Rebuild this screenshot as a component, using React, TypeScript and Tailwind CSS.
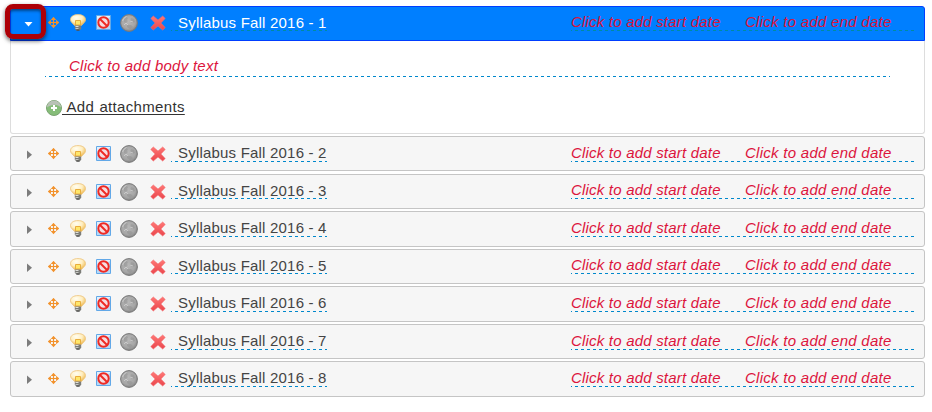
import React from "react";

const FONT = "font-['Liberation_Sans',Arial,sans-serif]";

function Move() {
  return (
    <svg className="ml-[15px] shrink-0" width="11" height="12" viewBox="0 0 11 12" fill="#f2922c">
      <path d="M4.900 1h1.200v9H4.900zM1 4.900h9v1.200H1z" />
      <path d="M5.500-.2 8.300 2.900H2.700zM5.500 11.200 8.300 8.100H2.700zM-.2 5.500 2.900 2.700v5.600zM11.200 5.500 8.100 2.700v5.600z" />
    </svg>
  );
}

function Bulb() {
  return (
    <svg className="ml-[11px] shrink-0" width="16" height="18" viewBox="0 0 16 18">
      <defs>
        <radialGradient id="glow" cx="38%" cy="28%" r="72%">
          <stop offset="0" stopColor="#fffdf2" />
          <stop offset=".55" stopColor="#ffefc2" />
          <stop offset="1" stopColor="#f0bd58" />
        </radialGradient>
      </defs>
      <path d="M8 .6c4.500 0 7.500 2 7.500 5 0 2.800-2.500 3.800-4 5.900h-7C3 9.400.5 8.400.5 5.600.5 2.600 3.500.6 8 .6z" fill="url(#glow)" stroke="#ecc27a" strokeWidth=".8" />
      <path d="M5.500 6.500h5v4.500h-5z" fill="#ffe76a" stroke="#e8ad3c" strokeWidth="1" />
      <path d="M4.800 11.500h6.400v3.300L9.600 16.600H6.400L4.800 14.800z" fill="#7c7d78" />
      <path d="M5.500 12h3v1h-3zM5.500 14h3v.8h-3z" fill="#dfe0dc" />
      <path d="M6.500 15.600h3v1h-3z" fill="#444" />
    </svg>
  );
}

function Banned() {
  return (
    <svg className="ml-[10px] shrink-0" width="15" height="16" viewBox="0 0 15 16">
      <path d="M.5.5h14v14H.5z" fill="#e2f0fc" stroke="#62a8e8" />
      <path d="M1 14V9l13-7v12z" fill="#b5d8f7" />
      <circle cx="7.500" cy="7.500" r="5.200" fill="#f6dde0" stroke="#ee2a24" strokeWidth="2" />
      <path d="m4 4 7 7" stroke="#ee2a24" strokeWidth="2" />
    </svg>
  );
}

function Globe() {
  return (
    <svg className="ml-[9px] shrink-0" width="18" height="18" viewBox="0 0 18 18">
      <defs>
        <radialGradient id="sphere" cx="45%" cy="40%" r="60%">
          <stop offset="0" stopColor="#b8b8b8" />
          <stop offset=".7" stopColor="#a6a6a6" />
          <stop offset="1" stopColor="#868686" />
        </radialGradient>
      </defs>
      <circle cx="9" cy="9" r="8.400" fill="url(#sphere)" stroke="#787878" />
      <path d="m4 5 2-2 2 1-1 2 1 1-2 2-2-1zM11 4l3 1 1 3-3 1-2-2zM7 11l4 0 2 2-3 2-3-2z" fill="#7a7a7a" opacity=".28" />
      <path d="M2.500 7a7 7 0 0 1 4-4.500M4 11l2-2 2 2M10 7l3 1" stroke="#d4d4d4" fill="none" opacity=".7" />
    </svg>
  );
}

function Cross() {
  return (
    <svg className="ml-[12px] shrink-0" width="16" height="16" viewBox="0 0 16 16">
      <defs>
        <linearGradient id="cross" x1="0" y1="0" x2="0" y2="1">
          <stop offset="0" stopColor="#ff7775" />
          <stop offset="1" stopColor="#ea464c" />
        </linearGradient>
      </defs>
      <path d="m3.300 1 4.700 4.100L12.700 1 15.200 3.400 10.900 8l4.300 4.600-2.500 2.400L8 10.900 3.300 15 .8 12.600 5.100 8 .8 3.400z" fill="url(#cross)" stroke="#f4686b" strokeWidth=".6" />
    </svg>
  );
}

function Dash({ color, className }: { color: string; className: string }) {
  return (
    <svg className={`block h-px ${className}`} preserveAspectRatio="none">
      <line x1="0" y1=".5" x2="100%" y2=".5" stroke={color} strokeDasharray="3 3" strokeDashoffset="2" />
    </svg>
  );
}

type RowProps = { n: number; open?: boolean; tight?: boolean; box: string };

function Row({ n, open, tight, box }: RowProps) {
  const line = open ? "#008b9e" : "#0088cc";
  return (
    <div
      className={`flex w-[915px] items-start border ${box} ${
        open ? "rounded-t-[3px] border-[#003eff] bg-[#007fff]" : "rounded-[3px] border-[#c5c5c5] bg-[#f6f6f6]"
      }`}
    >
      <div className={`flex w-[160px] shrink-0 items-center ${open ? "pt-[7px]" : "pt-[8px]"}`}>
        {open ? (
          <svg className="ml-[13px] shrink-0" width="9" height="18" viewBox="0 0 9 18"><path d="M.5 8h8l-4 4.500z" fill="#fff" /></svg>
        ) : (
          <svg className="ml-[13px] shrink-0" width="9" height="18" viewBox="0 0 9 18"><path d="M3 5.500v8.500l5-4.250z" fill="#7c7c7c" /></svg>
        )}
        <Move /><Bulb /><Banned /><Globe /><Cross />
      </div>
      <div className="w-[156px] shrink-0 pt-[7px]">
        <div className={`pl-[7px] text-[15px] leading-[17px] tracking-[0.2px] whitespace-nowrap ${open ? "text-white" : "text-[#444]"}`}>
          Syllabus Fall 2016 - {n}
        </div>
        <Dash color={line} className={tight ? "-mt-px w-full" : "w-full"} />
      </div>
      <div
        className={`ml-[244px] flex text-[15px] leading-[17px] whitespace-nowrap text-[#dc143c] italic ${tight ? "pt-[6px]" : "pt-[7px]"}`}
      >
        <div className="w-[174px] tracking-[0.2px]">Click to add start date<Dash color={line} className="w-full" /></div>
        <div className="w-[172px] tracking-[0.27px]">Click to add end date<Dash color={line} className="w-full" /></div>
      </div>
    </div>
  );
}

const rows: RowProps[] = [
  { n: 2, box: "h-[35px]" },
  { n: 3, box: "h-[35px] mt-[3px]", tight: true },
  { n: 4, box: "h-[36px] mt-[2px]" },
  { n: 5, box: "h-[35px] mt-[2px]", tight: true },
  { n: 6, box: "h-[36px] mt-[2px]" },
  { n: 7, box: "h-[35px] mt-[2px]" },
  { n: 8, box: "h-[36px] mt-[2px]" },
];

export default function App() {
  return (
    <main className={`relative h-[412px] w-[932px] overflow-hidden bg-white pt-[6px] pl-[10px] ${FONT}`}>
      <Row n={1} open tight box="h-[35px]" />
      <section className="mb-[2px] h-[93px] w-[915px] rounded-b-[3px] border border-t-0 border-[#ddd] pt-[16px] pl-[34px]">
        <div className="w-[845px] text-[15px] leading-[18px] tracking-[0.26px] text-[#dc143c] italic">
          <div className="pl-[24px]">Click to add body text</div>
          <Dash color="#0088cc" className="mt-px w-full" />
        </div>
        <a className="mt-[21px] flex items-center text-[15px] leading-[20px] tracking-[0.33px] text-[#333]">
          <svg className="ml-px shrink-0" width="16" height="16" viewBox="0 0 16 16">
            <circle cx="8" cy="8" r="7.500" fill="#86bd79" stroke="#7aa371" />
            <path d="M1 7.500a7 7 0 0 1 14 0C11 3.500 6 4 1 7.500z" fill="#b9c2b6" />
            <path d="M8 5v6M5 8h6" stroke="#fff" strokeWidth="2" />
          </svg>
          <span className="-mt-px whitespace-pre underline underline-offset-2 [word-spacing:0.8px]"> Add attachments</span>
        </a>
      </section>
      {rows.map((row) => <Row key={row.n} {...row} />)}
      <div className="absolute top-[4px] left-[5px] h-[35px] w-[41px] rounded-[8px] border-[5px] border-[#ad0007] shadow-[0px_2px_4px_rgba(0,0,0,0.6),inset_0px_2px_3px_rgba(0,0,0,0.45)]" />
    </main>
  );
}
